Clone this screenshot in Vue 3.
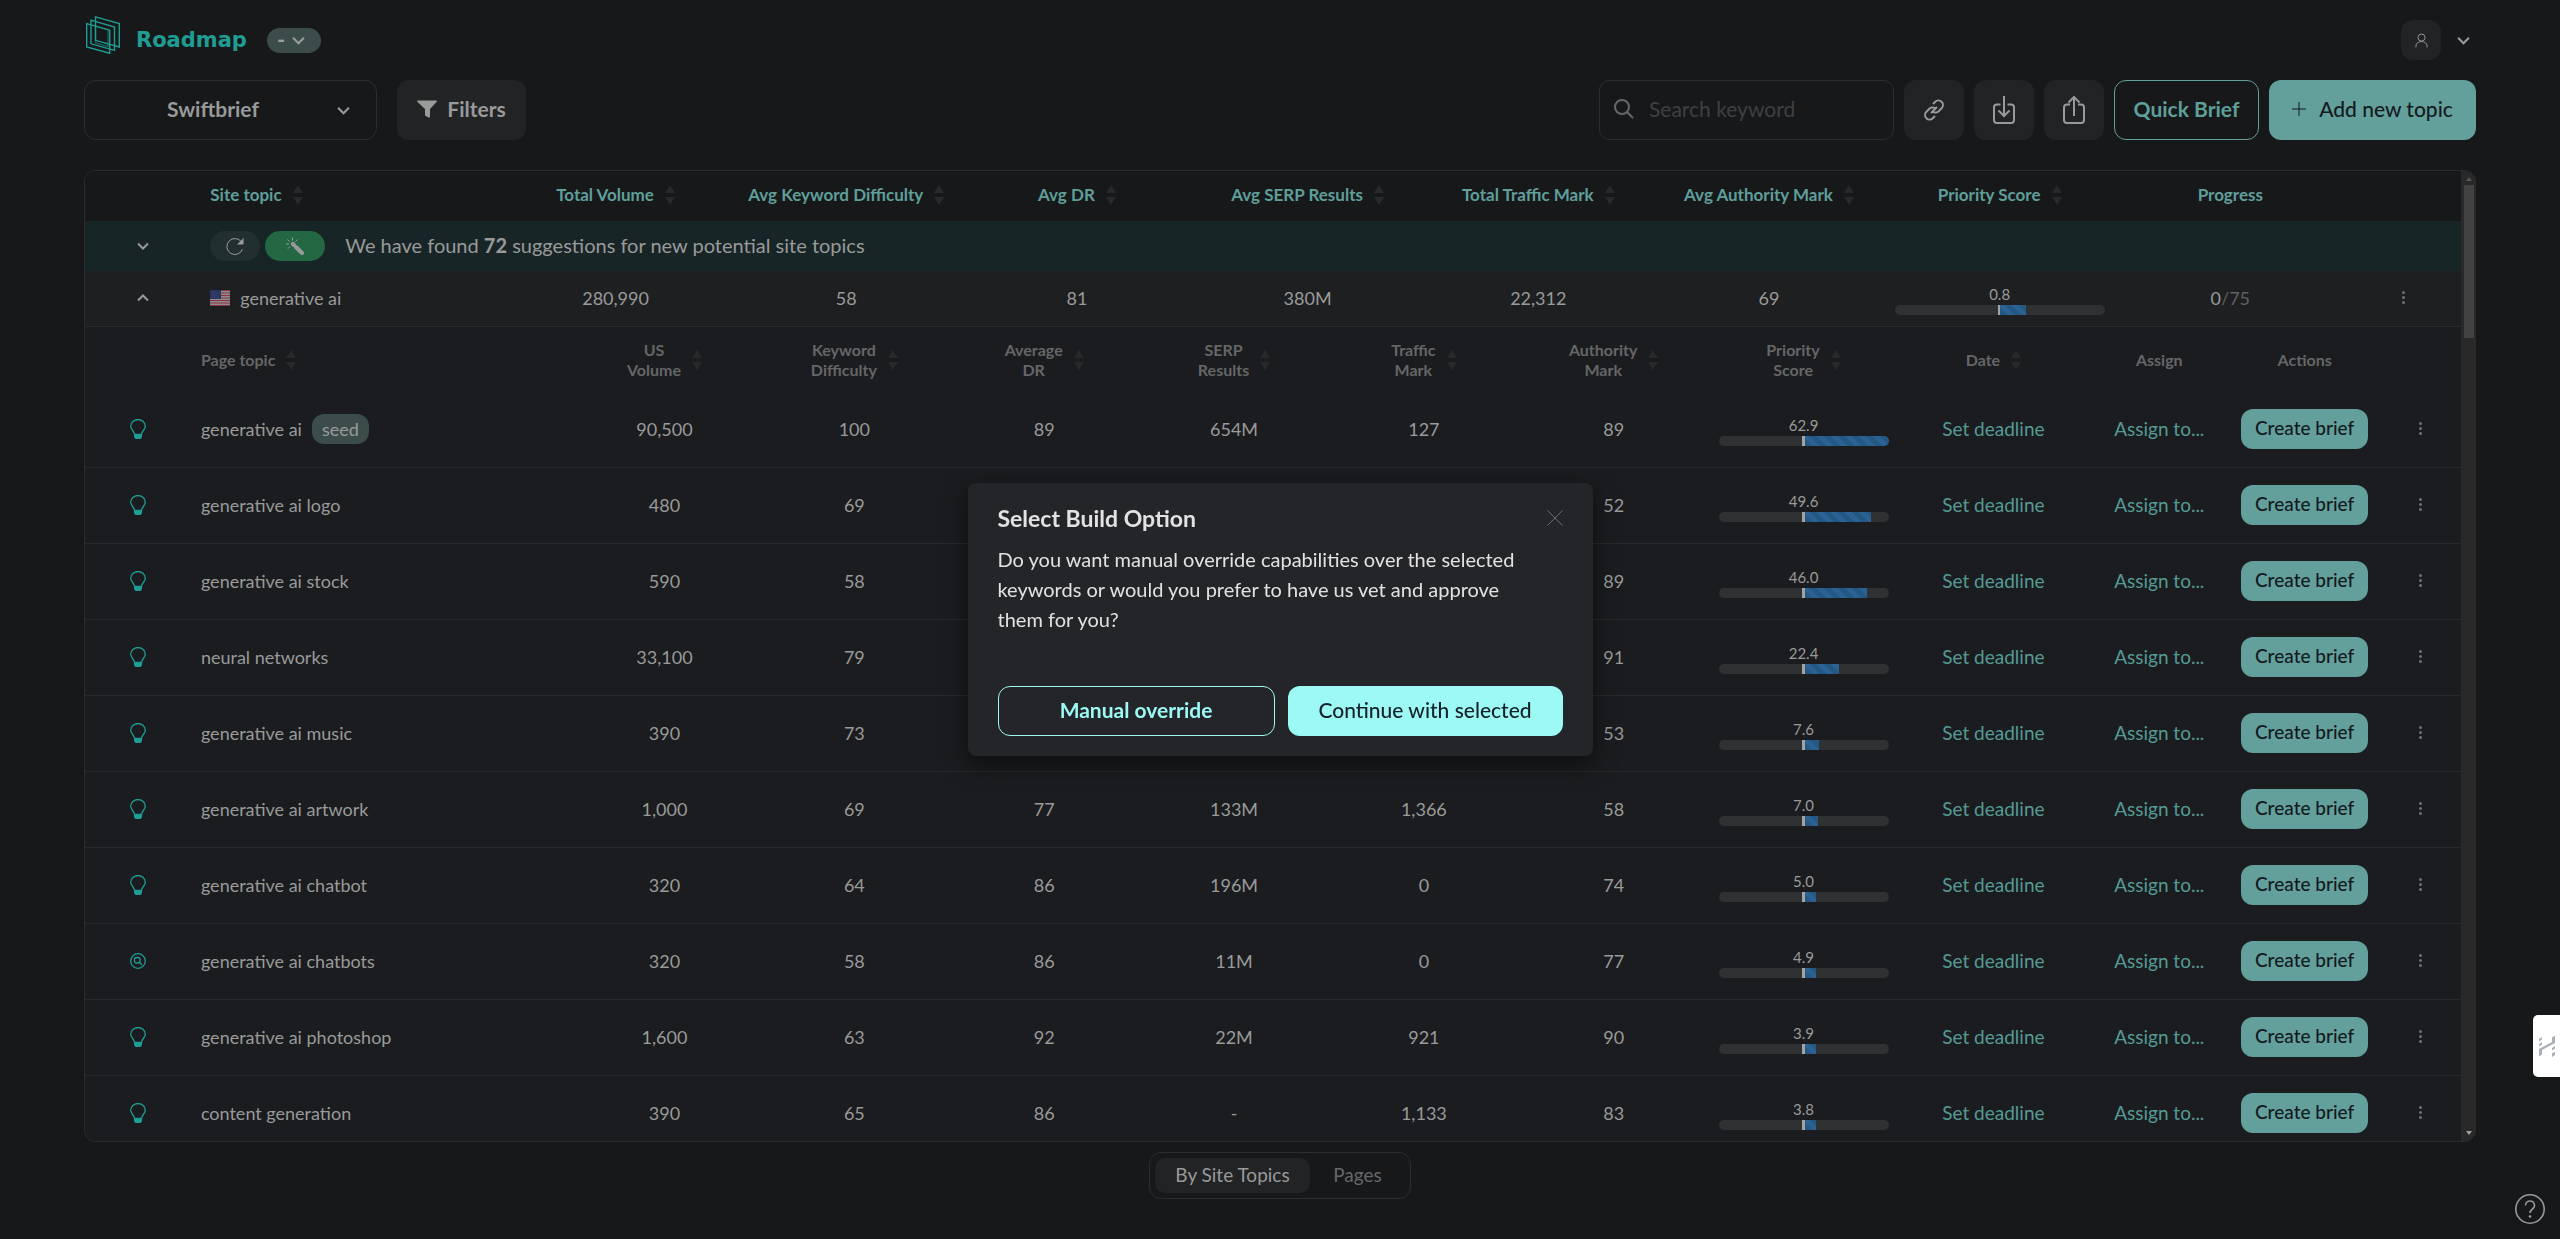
<script setup>
import { ref } from 'vue'

const project = ref('Swiftbrief')
const workspace = ref('-')
const keyword = ref('')
const view = ref('topics')

const siteColumns = [
  'Total Volume',
  'Avg Keyword Difficulty',
  'Avg DR',
  'Avg SERP Results',
  'Total Traffic Mark',
  'Avg Authority Mark',
  'Priority Score',
]

const siteTopic = {
  name: 'generative ai',
  values: ['280,990', '58', '81', '380M', '22,312', '69'],
  score: '0.8',
  fill: 25,
}

const pageColumns = [
  ['US', 'Volume'],
  ['Keyword', 'Difficulty'],
  ['Average', 'DR'],
  ['SERP', 'Results'],
  ['Traffic', 'Mark'],
  ['Authority', 'Mark'],
  ['Priority', 'Score'],
  ['Date'],
]

const pages = [
  { name: 'generative ai', seed: true, values: ['90,500', '100', '89', '654M', '127', '89'], score: '62.9', fill: 100 },
  { name: 'generative ai logo', values: ['480', '69', '', '', '', '52'], score: '49.6', fill: 78 },
  { name: 'generative ai stock', values: ['590', '58', '', '', '', '89'], score: '46.0', fill: 74 },
  { name: 'neural networks', values: ['33,100', '79', '', '', '', '91'], score: '22.4', fill: 41 },
  { name: 'generative ai music', values: ['390', '73', '', '', '', '53'], score: '7.6', fill: 17 },
  { name: 'generative ai artwork', values: ['1,000', '69', '77', '133M', '1,366', '58'], score: '7.0', fill: 16 },
  { name: 'generative ai chatbot', values: ['320', '64', '86', '196M', '0', '74'], score: '5.0', fill: 14 },
  { name: 'generative ai chatbots', search: true, values: ['320', '58', '86', '11M', '0', '77'], score: '4.9', fill: 14 },
  { name: 'generative ai photoshop', values: ['1,600', '63', '92', '22M', '921', '90'], score: '3.9', fill: 13 },
  { name: 'content generation', values: ['390', '65', '86', '-', '1,133', '83'], score: '3.8', fill: 13 },
]
</script>

<template>
  <div class="app">
    <header class="top">
      <svg class="logo" viewBox="0 0 34 38" aria-hidden="true">
        <path d="M9.500.8 33.300 7.500V31L9.500 24.300ZM5 4.200 28.500 11V34.300L5 27.800ZM.7 7.700 23.700 14.200V37.300L.7 31Z" />
        <path d="M9.500 10.200 22 13.700V30.500L9.500 27Z" opacity="0.500" />
      </svg>
      <h1 class="brand">Roadmap</h1>
      <div class="pill-select">
        <select v-model="workspace" aria-label="Workspace">
          <option value="-">-</option>
        </select>
        <svg class="chev" viewBox="0 0 12 8" aria-hidden="true"><path d="M1 1.500 6 6.500 11 1.500" /></svg>
      </div>
      <div class="account">
        <button class="avatar" aria-label="Account">
          <svg viewBox="0 0 14 16" aria-hidden="true"><circle cx="7" cy="4.800" r="3.800" /><path d="M1 15.500V14C1 7.500 13 7.500 13 14v1.500" /></svg>
        </button>
        <button class="plain" aria-label="Open account menu">
          <svg class="chev" viewBox="0 0 12 8" aria-hidden="true"><path d="M1 1.500 6 6.500 11 1.500" /></svg>
        </button>
      </div>
    </header>

    <div class="toolbar">
      <div class="project-select">
        <select v-model="project" aria-label="Project">
          <option>Swiftbrief</option>
        </select>
        <svg class="chev" viewBox="0 0 12 8" aria-hidden="true"><path d="M1 1.500 6 6.500 11 1.500" /></svg>
      </div>
      <button class="box filters">
        <svg viewBox="0 0 20 18" aria-hidden="true"><path d="M.8.500h18.400q1.200.3.300 1.500L13 9v8q-.5 1-1.500.6L8 15.500V9L.5 2Q-.2.8.8.500Z" /></svg>
        Filters
      </button>
      <label class="search">
        <svg viewBox="0 0 20 20" aria-hidden="true"><circle cx="8" cy="8" r="7" /><path d="m13 13 6 6" /></svg>
        <input v-model="keyword" type="text" placeholder="Search keyword" aria-label="Search keyword" />
      </label>
      <button class="box square" aria-label="Copy link">
        <svg viewBox="0 0 24 24" width="24" height="24" aria-hidden="true">
          <path d="M10 13a4.500 4.500 0 0 0 6.400.4l3.200-3.200a4.500 4.500 0 0 0-6.400-6.400l-2.200 2.200M14 11a4.500 4.500 0 0 0-6.400-.4l-3.200 3.200a4.500 4.500 0 0 0 6.400 6.400l2.200-2.200M9 15l6-6" />
        </svg>
      </button>
      <button class="box square" aria-label="Import">
        <svg viewBox="0 0 22 28" width="22" height="28" aria-hidden="true">
          <path d="M7.500 8.500H4a3 3 0 0 0-3 3V24a3 3 0 0 0 3 3h14a3 3 0 0 0 3-3V11.500a3 3 0 0 0-3-3h-3.500M11 0v20M5.500 14.500 11 20l5.500-5.500" />
        </svg>
      </button>
      <button class="box square" aria-label="Share">
        <svg viewBox="0 0 22 28" width="22" height="28" aria-hidden="true">
          <path d="M7 8.500H4a3 3 0 0 0-3 3V24a3 3 0 0 0 3 3h14a3 3 0 0 0 3-3V11.500a3 3 0 0 0-3-3h-3M11 20V1M5.500 6.500 11 1l5.500 5.500" />
        </svg>
      </button>
      <button class="quick">Quick Brief</button>
      <button class="add">
        <svg viewBox="0 0 14 14" aria-hidden="true"><path d="M7 0v14M0 7h14" /></svg>
        Add new topic
      </button>
    </div>

    <main class="panel">
      <div class="viewport">
        <table class="site">
          <thead>
            <tr class="site-row head">
              <th aria-label="Expand"></th>
              <th class="left">Site topic<span class="sort"></span></th>
              <th v-for="c in siteColumns" :key="c">{{ c }}<span class="sort"></span></th>
              <th>Progress</th>
              <th aria-label="Menu"></th>
            </tr>
          </thead>
          <tbody>
            <tr class="suggest">
              <td>
                <button class="plain" aria-label="Show suggestions">
                  <svg class="chev small" viewBox="0 0 12 8" aria-hidden="true"><path d="M1 1.500 6 6.500 11 1.500" /></svg>
                </button>
              </td>
              <td class="left">
                <button class="refresh" aria-label="Refresh suggestions">
                  <svg viewBox="0 0 18 18" aria-hidden="true"><path d="M15.500 5A8 8 0 1 0 16.500 12" /><path class="solid" d="M17.500 1v6.500H11Z" /></svg>
                </button>
                <button class="wand" aria-label="Generate suggestions">
                  <svg viewBox="0 0 18 18" aria-hidden="true">
                    <path d="M6.500.5v3M1.500 2.500 3.500 4.500M0 7h3M2 11.500 4 9.500M11.500 2.500 9.500 4.500" />
                    <path class="stick" d="m6.800 6.800 1.200 1.200" /><path class="stick" d="M10 10l6 6" />
                  </svg>
                </button>
                <p>We have found <b>72</b> suggestions for new potential site topics</p>
              </td>
            </tr>
            <tr class="site-row topic">
              <td>
                <button class="plain" aria-label="Collapse topic">
                  <svg class="chev small" viewBox="0 0 12 8" aria-hidden="true"><path d="M1 6.500 6 1.500 11 6.500" /></svg>
                </button>
              </td>
              <td class="left">
                <svg class="flag" viewBox="0 0 20 16" role="img" aria-label="United States">
                  <path fill="#8f8c91" stroke="none" d="M0 0h20v16H0z" />
                  <path stroke="#8b3440" d="M0 .5h20M0 3h20M0 5.500h20M0 8h20M0 10.500h20M0 13h20M0 15.500h20" />
                  <path fill="#25315f" stroke="none" d="M0 0h11v9H0z" />
                  <path stroke="#66708c" stroke-dasharray="1 1" stroke-width="0.500" d="M1 2h9M2 4h8M1 6h9M2 8h8" />
                </svg>
                {{ siteTopic.name }}
              </td>
              <td v-for="(v, i) in siteTopic.values" :key="i">{{ v }}</td>
              <td>
                <div class="score wide">
                  <span>{{ siteTopic.score }}</span>
                  <div class="bar thin"><i :style="{ width: siteTopic.fill + '%' }"></i></div>
                </div>
              </td>
              <td>0<span class="muted">/75</span></td>
              <td><button class="plain dots" aria-label="Topic menu"><i></i><i></i><i></i></button></td>
            </tr>
          </tbody>
        </table>

        <table class="pages">
          <thead>
            <tr class="page-row head">
              <th aria-label="Type"></th>
              <th class="left">Page topic<span class="sort"></span></th>
              <th v-for="c in pageColumns" :key="c[0] + c[1]">
                <span><template v-for="(line, i) in c" :key="line"><br v-if="i" />{{ line }}</template></span>
                <span class="sort"></span>
              </th>
              <th>Assign</th>
              <th>Actions</th>
              <th aria-label="Menu"></th>
            </tr>
          </thead>
          <tbody>
            <tr v-for="p in pages" :key="p.name" class="page-row">
              <td>
                <svg v-if="p.search" class="kind" viewBox="0 0 16 20" role="img" aria-label="Search keyword">
                  <circle cx="8" cy="10" r="7.300" /><rect x="4.500" y="6.500" width="5.500" height="5.500" rx="2" /><path d="m9.500 11.500 2.500 2.500" />
                </svg>
                <svg v-else class="kind" viewBox="0 0 16 20" role="img" aria-label="Idea">
                  <path d="M4.500 15.500C4.500 12 .7 11 .7 7.300a7.300 6.800 0 0 1 14.600 0C15.300 11 11.500 12 11.500 15.500Z" />
                  <path class="solid" d="M4 15h8v3q-.5 2-2 2H6q-1.500 0-2-2Z" />
                </svg>
              </td>
              <td class="left">{{ p.name }}<span v-if="p.seed" class="seed">seed</span></td>
              <td v-for="(v, i) in p.values" :key="i">{{ v }}</td>
              <td>
                <div class="score">
                  <span>{{ p.score }}</span>
                  <div class="bar"><i :style="{ width: p.fill + '%' }"></i></div>
                </div>
              </td>
              <td><a href="#">Set deadline</a></td>
              <td><a href="#">Assign to...</a></td>
              <td><button class="create">Create brief</button></td>
              <td><button class="plain dots" aria-label="Page menu"><i></i><i></i><i></i></button></td>
            </tr>
          </tbody>
        </table>
      </div>
      <div class="scroll" aria-hidden="true">
        <svg viewBox="0 0 6 4"><path d="M0 4 3 0l3 4Z" fill="#555" /></svg>
        <div class="thumb"></div>
        <svg viewBox="0 0 6 4"><path d="M0 0h6L3 4Z" fill="#a0a0a0" /></svg>
      </div>
    </main>

    <nav class="views">
      <button :class="{ on: view === 'topics' }" @click="view = 'topics'">By Site Topics</button>
      <button :class="{ on: view === 'pages' }" @click="view = 'pages'">Pages</button>
    </nav>

    <button class="feedback" aria-label="Feedback">
      <svg viewBox="0 0 16 22" aria-hidden="true">
        <path d="M0 21.500V14L13 7V2.500L16 .5V8L3 15v4.500ZM0 4l3-2v2.500L0 6.500ZM0 9l3-2v2.500L0 11.500ZM13 13l3-2v2.500l-3 2ZM13 18.500l3-2v3.500l-3 2Z" />
      </svg>
    </button>
    <button class="help" aria-label="Help">
      <svg viewBox="0 0 30 30" aria-hidden="true">
        <circle cx="15" cy="15" r="14.200" /><path d="M10.500 11.500C10.500 5.500 19.500 5.500 19.500 11.500c0 4-4.500 3.500-4.500 7.500" /><circle class="dot" cx="15" cy="22.500" r="1.300" />
      </svg>
    </button>

    <div class="overlay">
      <section class="modal" role="dialog" aria-labelledby="build-title">
        <div class="modal-head">
          <h2 id="build-title">Select Build Option</h2>
          <button class="plain" aria-label="Close">
            <svg viewBox="0 0 16 16" aria-hidden="true"><path d="m.5.500 15 15M15.500.5l-15 15" /></svg>
          </button>
        </div>
        <p>Do you want manual override capabilities over the selected keywords or would you prefer to have us vet and approve them for you?</p>
        <div class="modal-actions">
          <button class="ghost">Manual override</button>
          <button class="primary">Continue with selected</button>
        </div>
      </section>
    </div>
  </div>
</template>

<style>
body {
  background: #17181a;
}
</style>

<style scoped>
* {
  box-sizing: border-box;
}
.app {
  display: flex;
  flex-direction: column;
  height: 100vh;
  padding: 0 84px 40px;
  background: #17181a;
  color: #999a9a;
  font: 18px/24px Lato, "Noto Sans", sans-serif;
}
button,
select,
input {
  margin: 0;
  padding: 0;
  border: 0;
  background: none;
  color: inherit;
  font: inherit;
}
svg {
  flex: none;
  fill: none;
  stroke: currentColor;
}
.solid {
  fill: currentColor;
  stroke: none;
}
.plain {
  display: grid;
  place-items: center;
}
.chev {
  width: 13px;
  height: 9px;
  stroke-width: 2;
}
.chev.small {
  width: 12px;
  height: 8px;
}

.top {
  display: flex;
  align-items: center;
  flex: none;
  height: 80px;
}
.logo {
  width: 34px;
  height: 38px;
  margin: 0 16px 10px 2px;
  color: #1f9d93;
  stroke-width: 1.4;
}
.brand {
  margin: 0 20px 0 0;
  color: #1f9d93;
  font: bold 21px/26px "DejaVu Sans", sans-serif;
}
.pill-select,
.project-select {
  position: relative;
}
.pill-select select {
  display: block;
  width: 54px;
  height: 25px;
  padding-left: 10px;
  border-radius: 13px;
  background: #3b4c4a;
  font-size: 22px;
  font-weight: 700;
  appearance: none;
}
.pill-select .chev,
.project-select .chev {
  position: absolute;
  top: 50%;
  margin-top: -4px;
  pointer-events: none;
}
.pill-select .chev {
  right: 16px;
}
.account {
  display: flex;
  align-items: center;
  gap: 16px;
  margin: 0 6px 0 auto;
}
.avatar {
  display: grid;
  place-items: center;
  width: 40px;
  height: 40px;
  border-radius: 12px;
  background: #222325;
}
.avatar svg {
  width: 13px;
  height: 15px;
}

.toolbar {
  display: flex;
  flex: none;
  gap: 10px;
  height: 60px;
  margin-bottom: 30px;
  font-size: 21px;
}
.project-select select {
  display: block;
  width: 293px;
  height: 60px;
  padding: 0 35px 2px 0;
  border: 1px solid #2c2d2f;
  border-radius: 12px;
  font-weight: 700;
  text-align: center;
  text-align-last: center;
  appearance: none;
}
.project-select .chev {
  right: 27px;
}
.box {
  display: flex;
  align-items: center;
  justify-content: center;
  gap: 10px;
  border-radius: 12px;
  background: #222325;
}
.filters {
  width: 129px;
  margin-left: 10px;
  padding-bottom: 2px;
  font-weight: 700;
}
.filters svg {
  width: 20px;
  height: 18px;
  fill: currentColor;
  stroke: none;
}
.search {
  display: flex;
  align-items: center;
  gap: 15px;
  width: 295px;
  margin-left: auto;
  padding: 0 14px 2px;
  border: 1px solid #2c2d2f;
  border-radius: 10px;
  color: #666768;
}
.search svg {
  width: 20px;
  height: 20px;
  stroke-width: 2;
}
.search input {
  flex: 1;
  min-width: 0;
  outline: 0;
}
.search input::placeholder {
  color: #3f4042;
}
.square {
  width: 60px;
}
.square svg {
  stroke-width: 2;
}
.quick {
  width: 145px;
  padding-bottom: 2px;
  border: 1px solid #639f9b;
  border-radius: 12px;
  color: #5f9f9a;
  font-weight: 700;
}
.add {
  display: flex;
  align-items: center;
  justify-content: center;
  gap: 13px;
  width: 207px;
  padding-bottom: 2px;
  border-radius: 12px;
  background: #639f9b;
  color: #131a20;
  font-weight: 500;
}
.add svg {
  width: 14px;
  height: 14px;
}

.panel {
  display: flex;
  flex: 1;
  min-height: 0;
  border: 1px solid #2a2b2d;
  border-right: 0;
  border-radius: 12px;
  overflow: hidden;
}
.viewport {
  flex: 1;
  min-width: 0;
  overflow: hidden;
  background: #1b1c1f;
}
table,
thead,
tbody {
  display: block;
}
tr {
  display: grid;
}
th,
td {
  display: flex;
  align-items: center;
  justify-content: center;
  min-width: 0;
  padding: 0;
}
.left {
  justify-content: flex-start;
  padding-left: 10px;
}
.site-row {
  grid-template-columns: 5fr 13fr repeat(8, 10fr) 5fr;
}
.site .head {
  height: 50px;
  padding-bottom: 2px;
  background: #17181a;
}
.site th {
  color: #5f9f9a;
  font-size: 17px;
  font-weight: 700;
  white-space: nowrap;
}
.sort {
  display: grid;
  align-content: space-between;
  flex: none;
  height: 20px;
  margin-left: 11px;
}
.sort::before,
.sort::after {
  border: 5px solid transparent;
  content: "";
}
.sort::before {
  border-top: 0;
  border-bottom: 8px solid #27292a;
}
.sort::after {
  border-top: 8px solid #27292a;
  border-bottom: 0;
}
.suggest {
  grid-template-columns: 5fr 98fr;
  height: 50px;
  background: #182527;
}
.suggest p {
  margin: 0 0 2px 20px;
  font-size: 20px;
}
.refresh,
.wand {
  display: grid;
  place-items: center;
  width: 50px;
  height: 30px;
  border-radius: 15px;
  background: #222f31;
}
.refresh svg,
.wand svg {
  width: 18px;
  height: 18px;
}
.wand {
  width: 60px;
  margin-left: 5px;
  background: #236842;
}
.wand .stick {
  stroke-width: 4;
  stroke-linecap: round;
}
.topic {
  height: 56px;
  padding-bottom: 2px;
  border-bottom: 1px solid #292a2c;
  background: #1e1f21;
}
.flag {
  width: 20px;
  height: 16px;
  margin-right: 10px;
}
.muted {
  color: #606162;
}
.dots {
  gap: 2px;
  padding: 4px;
}
.dots i {
  width: 3px;
  height: 3px;
  border-radius: 50%;
  background: #717273;
}

.page-row {
  grid-template-columns: 106fr 379fr repeat(8, 190fr) 142fr 149fr 82fr;
  height: 76px;
  border-bottom: 1px solid #292a2c;
}
.pages .head {
  height: 65px;
  border: 0;
}
.pages th {
  color: #656667;
  font-size: 16px;
  font-weight: 700;
  line-height: 20px;
}
.pages td {
  padding-bottom: 2px;
}
.kind {
  width: 16px;
  height: 20px;
  color: #1f9d93;
  stroke-width: 1.3;
}
.seed {
  margin-left: 10px;
  padding: 3px 10px;
  border-radius: 12px;
  background: #3b4c4a;
}
.pages a {
  color: #559a95;
  font-size: 19px;
  text-decoration: none;
}
.score {
  display: grid;
  width: 170px;
  padding-top: 2px;
  font-size: 15px;
  line-height: 22px;
  text-align: center;
}
.score.wide {
  width: 210px;
}
/* The fill grows from the middle, so its width is a share of the right half. */
.bar {
  display: flex;
  align-items: stretch;
  height: 10px;
  padding-left: 50%;
  border-radius: 5px;
  background: #303133;
  overflow: hidden;
}
.bar::before {
  flex: none;
  width: 3px;
  margin-left: -2px;
  background: #a3a3a3;
  content: "";
}
.bar.thin::before {
  width: 2px;
}
.bar i {
  flex: none;
  background: repeating-linear-gradient(45deg, #255783 0 5px, #2a6294 5px 10px);
}
.create {
  width: 127px;
  height: 40px;
  padding-bottom: 2px;
  border-radius: 12px;
  background: #639f9b;
  color: #131a20;
  font-size: 19px;
  font-weight: 500;
}

.scroll {
  display: flex;
  flex-direction: column;
  align-items: center;
  flex: none;
  width: 15px;
  padding: 6px 0;
  background: #292929;
}
.scroll svg {
  width: 6px;
  height: 4px;
  stroke: none;
}
.thumb {
  width: 10px;
  height: 16%;
  margin: 4px 0 auto;
  background: #424242;
}

.views {
  display: flex;
  flex: none;
  align-self: center;
  width: 262px;
  margin-top: 10px;
  padding: 5px;
  border: 1px solid #2c2d2f;
  border-radius: 12px;
  color: #66676a;
  font-size: 19px;
}
.views button {
  flex: 1;
  height: 35px;
  padding-bottom: 2px;
  border-radius: 10px;
}
.views .on {
  flex: none;
  width: 155px;
  background: #222325;
  color: #999a9a;
}

.feedback {
  position: fixed;
  right: 0;
  bottom: 162px;
  display: grid;
  place-items: center;
  width: 27px;
  height: 62px;
  border-radius: 5px 0 0 5px;
  background: #fff;
  color: #aab0ba;
}
.feedback svg {
  width: 16px;
  height: 22px;
  fill: currentColor;
  stroke: none;
}
.help {
  position: fixed;
  right: 15px;
  bottom: 15px;
  width: 30px;
  height: 30px;
}
.help svg {
  display: block;
  stroke-width: 1.6;
}
.help .dot {
  fill: currentColor;
  stroke: none;
}

.overlay {
  position: fixed;
  inset: 0;
  display: grid;
  place-items: center;
}
.modal {
  width: 625px;
  padding: 19px 30px 20px;
  border-radius: 8px;
  background: #242528;
  box-shadow: 0 8px 24px rgb(0 0 0 / 50%);
  color: #e2e2e2;
  font-size: 20px;
  line-height: 30px;
}
.modal-head {
  display: flex;
  align-items: center;
  justify-content: space-between;
}
.modal h2 {
  margin: 0;
  font-size: 23px;
  line-height: 32px;
}
.modal-head .plain {
  padding: 0;
  color: #6c6d70;
}
.modal-head svg {
  width: 16px;
  height: 16px;
}
.modal p {
  max-width: 540px;
  margin: 10px 0 52px;
}
.modal-actions {
  display: flex;
  gap: 13px;
}
.modal-actions button {
  flex: 1 0 0;
  height: 50px;
  padding-bottom: 2px;
  border-radius: 12px;
  font-size: 21px;
}
.modal-actions .ghost {
  border: 1px solid #9df9f4;
  color: #9df9f4;
  font-weight: 700;
}
.modal-actions .primary {
  background: #9df9f4;
  color: #15202b;
  font-weight: 500;
}
</style>
